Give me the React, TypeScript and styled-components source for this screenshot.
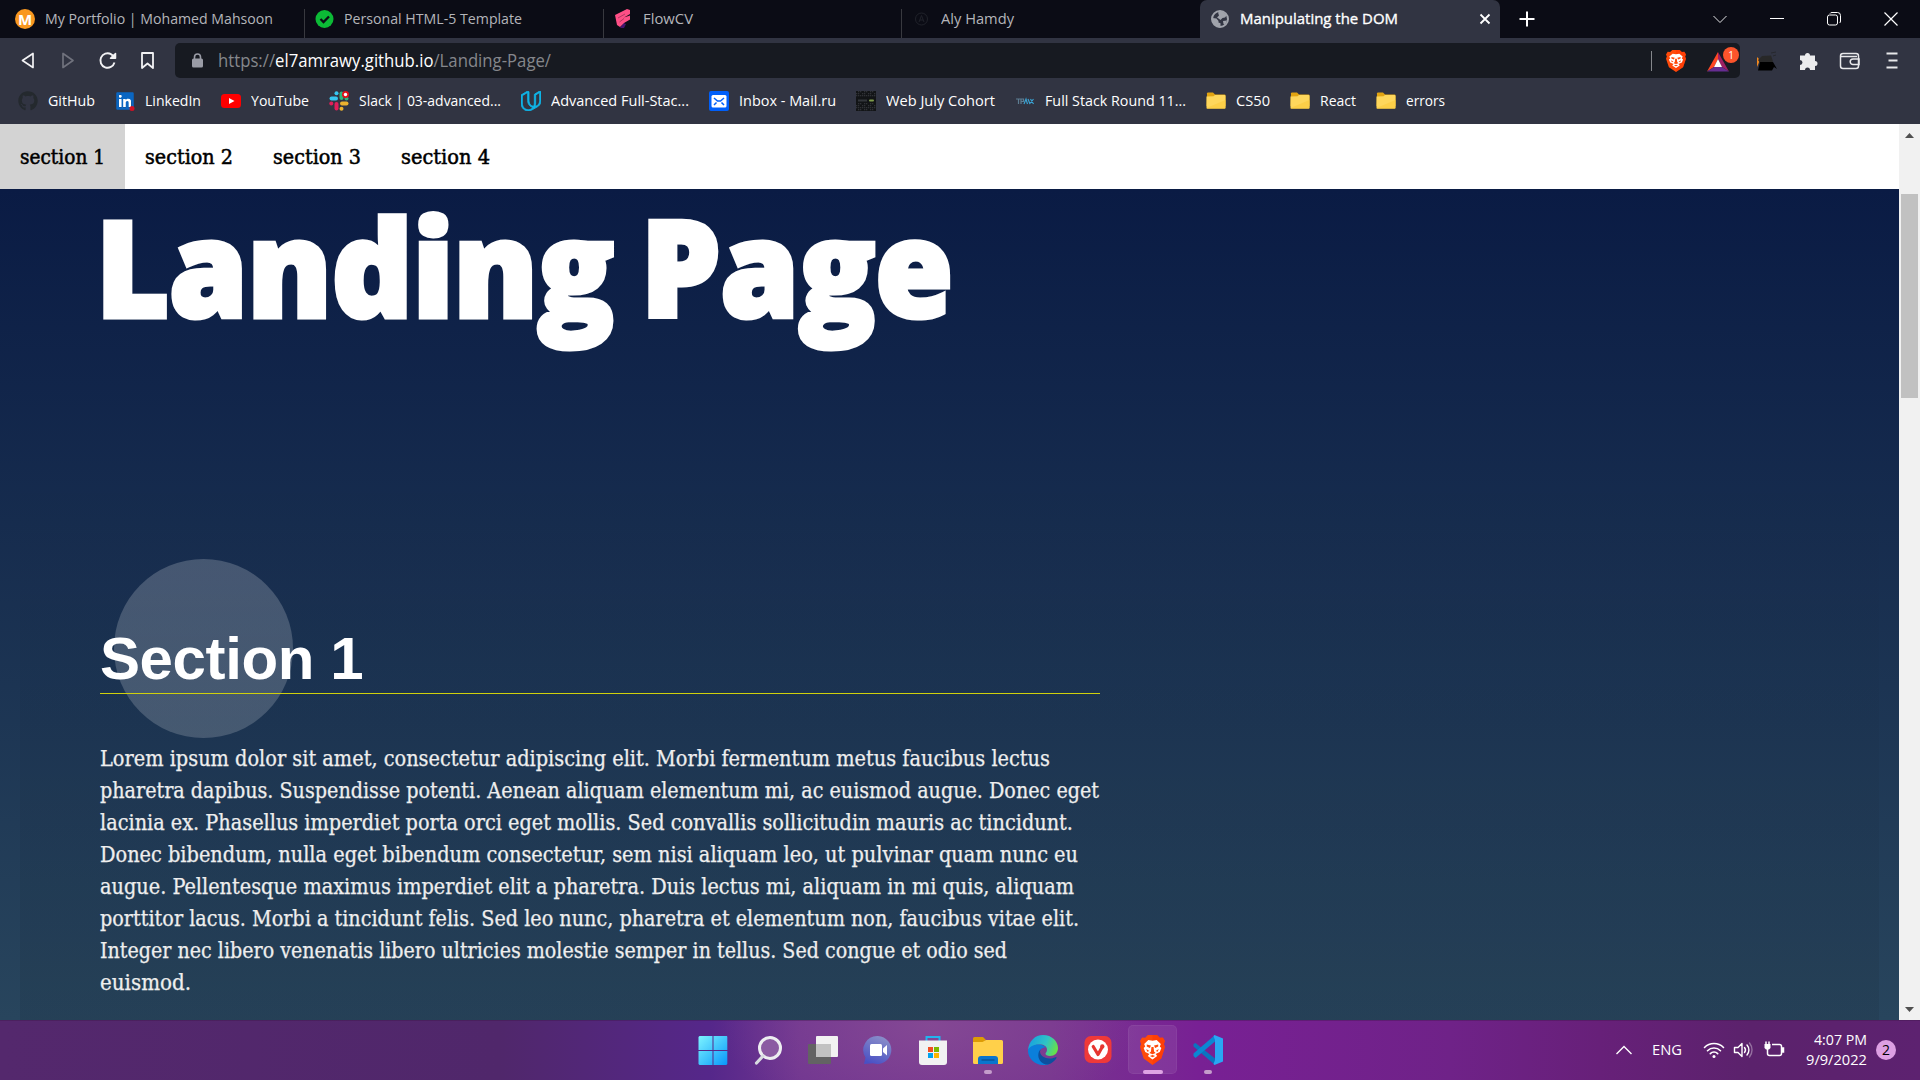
import React, { useLayoutEffect, useRef, useState } from "react";
import styled, { createGlobalStyle, css } from "styled-components";
import { FaGithub, FaLinkedin } from "react-icons/fa";
import { SiUdacity } from "react-icons/si";

const UI_FONT = `"Open Sans", "Noto Sans", sans-serif`;
const SERIF_FONT = `"DejaVu Serif Condensed", "DejaVu Serif", serif`;

const GlobalStyle = createGlobalStyle`
  * { box-sizing: border-box; }
  body { margin: 0; background: #0b0c15; overflow: hidden; }
  svg { display: block; flex: none; }
`;

/* ---------- text that is set to an exact measure ---------- */

const Measure = styled.span<{ $width: number }>`
  display: inline-block;
  flex: none;
  width: ${(p) => p.$width}px;
  padding-bottom: 2px;
  white-space: nowrap;
`;

const Stretch = styled.span`
  display: inline-block;
  transform-origin: 0 50%;
`;

function FitText({ width, children }: { width: number; children: React.ReactNode }) {
  const ref = useRef<HTMLSpanElement>(null);
  const [scale, setScale] = useState(1);
  useLayoutEffect(() => {
    if (ref.current) {
      const natural = ref.current.getBoundingClientRect().width;
      if (natural > 0) setScale(width / natural);
    }
  }, []);
  return (
    <Measure $width={width}>
      <Stretch ref={ref} style={{ transform: `scaleX(${scale})` }}>
        {children}
      </Stretch>
    </Measure>
  );
}

/* ---------- window ---------- */

const Screen = styled.div`
  display: flex;
  flex-direction: column;
  width: 1920px;
  height: 1080px;
  overflow: hidden;
  font-family: ${UI_FONT};
  font-size: 15px;
  line-height: 20px;
`;

const TabStrip = styled.div`
  display: flex;
  flex: none;
  height: 38px;
  background: #0b0c15;
`;

const Tab = styled.div<{ $active?: boolean; $width: number }>`
  display: flex;
  align-items: center;
  gap: ${(p) => (p.$active ? 11 : 9)}px;
  width: ${(p) => p.$width}px;
  padding: 0 9px 0 ${(p) => (p.$active ? 11 : 10)}px;
  color: #b4b5ba;
  ${(p) =>
    p.$active &&
    css`
      background: #313442;
      border-radius: 7px 7px 0 0;
      color: #fff;
      -webkit-text-stroke: 0.35px #fff;
    `}
`;

const TabDivider = styled.div`
  width: 1px;
  height: 29px;
  margin-top: 9px;
  background: #38393f;
`;

const Grow = styled.div`
  flex: 1;
`;

const NewTab = styled.div`
  display: flex;
  align-items: center;
  padding-left: 19px;
`;

const WindowButtons = styled.div`
  display: flex;
  align-items: center;
  gap: 43px;
  padding-right: 22px;
`;

const Toolbar = styled.div`
  display: flex;
  flex: none;
  align-items: center;
  height: 46px;
  background: #313442;
`;

const NavButtons = styled.div`
  display: flex;
  align-items: center;
  gap: 20px;
  width: 175px;
  padding-left: 18px;
`;

const AddressBar = styled.div`
  display: flex;
  align-items: center;
  width: 1565px;
  height: 35px;
  margin-top: -1px;
  padding: 0 1px 0 16px;
  border-radius: 5px;
  background: #171a21;
  color: #85878c;
  font-size: 17.5px;
`;

const Lock = styled.div`
  margin-right: 14px;
`;

const Host = styled.span`
  color: #fff;
`;

const BarDivider = styled.div`
  width: 1px;
  height: 20px;
  margin-right: 14px;
  background: #85878c;
`;

const Rewards = styled.div`
  position: relative;
  width: 33px;
  height: 30px;
  margin-left: 20px;
  padding-top: 6px;
`;

const RewardBadge = styled.div`
  position: absolute;
  top: 1px;
  right: 0;
  width: 16px;
  height: 16px;
  border-radius: 8px;
  background: #fb542b;
  color: #fff;
  font-size: 10px;
  line-height: 16px;
  text-align: center;
`;

const Extensions = styled.div`
  display: flex;
  align-items: center;
  gap: 20px;
  padding-left: 17px;
`;

const Bookmarks = styled.div`
  display: flex;
  flex: none;
  align-items: center;
  gap: 20px;
  height: 40px;
  padding: 0 0 6px 18px;
  background: #313442;
  color: #fff;
`;

const Bookmark = styled.div`
  display: flex;
  align-items: center;
  gap: 10px;
`;

/* ---------- page ---------- */

const Browser = styled.div`
  display: flex;
  flex: none;
  height: 896px;
`;

const Page = styled.div`
  width: 1899px;
  height: 896px;
`;

const SiteNav = styled.nav`
  display: flex;
  height: 65px;
  background: #fff;
  font-family: ${SERIF_FONT};
  font-size: 21px;
  color: #000;
`;

const SiteLink = styled.a<{ $active?: boolean }>`
  display: flex;
  align-items: center;
  padding: 2px 20px 0;
  background: ${(p) => (p.$active ? "#d3d3d3" : "transparent")};
  -webkit-text-stroke: 0.5px #000;
`;

const Main = styled.main`
  height: 831px;
  padding: 0 20px;
  background: linear-gradient(180deg, rgb(10, 27, 68), rgb(40, 69, 93));
`;

const Title = styled.h1`
  display: flex;
  gap: 27px;
  height: 251px;
  margin: 0;
  padding: 0 0 0 76px;
  color: #fff;
  font-family: "Open Sans", sans-serif;
  font-size: 133px;
  font-weight: 800;
  line-height: 154px;
  -webkit-text-stroke: 5px #fff;
  ${Measure} {
    padding: 0;
  }
`;

const Section = styled.section`
  position: relative;
  height: 580px;
  padding: 194px 80px 0;
  background: linear-gradient(180deg, rgba(0, 0, 0, 0), rgba(0, 0, 0, 0.07));
`;

const Circle = styled.div`
  position: absolute;
  top: 119px;
  left: 94px;
  width: 179px;
  height: 179px;
  border-radius: 50%;
  background: linear-gradient(0deg, rgba(255, 255, 255, 0.18), rgba(255, 255, 255, 0.2));
`;

const SectionTitle = styled.h2`
  position: relative;
  width: 1000px;
  height: 60px;
  margin: 0 0 49px;
  border-bottom: 1px solid #d0d00c;
  color: #fff;
  font-family: "Liberation Sans", Arial, sans-serif;
  font-size: 60px;
  font-weight: 700;
  letter-spacing: -0.4px;
  line-height: 49px;
`;

const Paragraph = styled.p`
  display: flex;
  flex-direction: column;
  margin: 0;
  color: #eee;
  font-family: ${SERIF_FONT};
  font-size: 21.5px;
  line-height: 32px;
  -webkit-text-stroke: 0.25px #eee;
  ${Measure} {
    height: 32px;
    padding: 0;
  }
`;

const Scrollbar = styled.div`
  display: flex;
  flex-direction: column;
  align-items: center;
  width: 21px;
  height: 896px;
  padding: 9px 0 8px;
  background: #f1f1f1;
`;

const Thumb = styled.div`
  width: 17px;
  height: 204px;
  margin: 56px 0 auto;
  background: #c1c1c1;
`;

/* ---------- taskbar ---------- */

const Taskbar = styled.footer`
  display: flex;
  flex: none;
  height: 60px;
  padding-left: 685px;
  box-shadow: inset 0 1px rgba(60, 20, 70, 0.35);
  background:
    radial-gradient(ellipse 210px 100px at 930px 5px, rgba(139, 80, 150, 0.7), rgba(139, 80, 150, 0)),
    linear-gradient(90deg, #54286d 0, #50276b 500px, #55278a 710px, #703590 800px, #77358f 1050px, #782094 1200px, #6f2288 1450px, #672079 1600px, #5b226c 1750px, #5d2270 1920px);
  color: #fff;
`;

const AppCell = styled.div`
  display: flex;
  width: 55px;
  padding: 5px 3px 0;
`;

const AppButton = styled.div<{ $active?: boolean }>`
  display: flex;
  flex-direction: column;
  align-items: center;
  width: 49px;
  height: 49px;
  padding-top: 10px;
  border-radius: 5px;
  ${(p) =>
    p.$active &&
    css`
      background: rgba(255, 255, 255, 0.08);
      box-shadow: inset 0 0 0 1px rgba(255, 255, 255, 0.05);
    `}
`;

const Indicator = styled.div<{ $active?: boolean }>`
  width: ${(p) => (p.$active ? 20 : 8)}px;
  height: 4px;
  margin-top: 5px;
  border-radius: 2px;
  background: ${(p) => (p.$active ? "#dfa3e4" : "#c49ccb")};
`;

const Tray = styled.div`
  display: flex;
  align-items: center;
  width: 305px;
`;

const Gap = styled.div<{ $w: number }>`
  width: ${(p) => p.$w}px;
`;

const Clock = styled.div`
  display: flex;
  flex-direction: column;
  align-items: flex-end;
  width: 62px;
  margin: 0 9px 0 20px;
  padding-bottom: 2px;
  ${Measure} {
    height: 20px;
    padding: 0;
  }
`;

const Count = styled.div`
  width: 20px;
  height: 20px;
  border-radius: 50%;
  background: #dda0e3;
  color: #000;
  font-size: 14px;
  line-height: 20px;
  text-align: center;
`;

/* ---------- icons ---------- */

const Globe = () => (
  <svg width="18" height="18" viewBox="0 0 18 18">
    <circle cx="9" cy="9" r="8" fill="none" stroke="#a0a3ab" strokeWidth="2" />
    <path d="M1.500 8l4 .5 2 2.500v1.500l2 .8v3.200l-2 .8A8.500 8.500 0 0 1 .8 9zM7 2.500l3.500-1.500 5.500 4-2 2.500-2.500.5L9.500 10 7.500 8.500 6 7.500 8 5.500zM12 11l4-.5-2 4.500-1.500-1z" fill="#a0a3ab" />
  </svg>
);

const Folder = () => (
  <svg width="20" height="18" viewBox="0 0 20 18">
    <path d="M1 2a1 1 0 0 1 1-1.500h5l2 2h9.500a1 1 0 0 1 1 1V14H.5z" fill="#e2a411" />
    <path d="M.5 4.500l7-.2L9 3h9.500a1 1 0 0 1 1 1v11.500a1 1 0 0 1-1 1h-17a1 1 0 0 1-1-1z" fill="#fed75c" />
    <path d="M.5 16a1 1 0 0 0 1 .9h17a1 1 0 0 0 1-1V8z" fill="#fac93b" opacity=".6" />
  </svg>
);

const SlackIcon = () => (
  <svg width="20" height="20" viewBox="0 0 20 20">
    <g strokeWidth="4" strokeLinecap="round">
      <path d="M2.500 7.500h4.500" stroke="#36c5f0" />
      <path d="M12.500 2.500V7" stroke="#2eb67d" />
      <path d="M13 12.500h4.500" stroke="#ecb22e" />
      <path d="M7.500 13v4.500" stroke="#e01e5a" />
    </g>
    <circle cx="7.500" cy="2.300" r="2" fill="#36c5f0" />
    <circle cx="2.300" cy="12.500" r="2" fill="#e01e5a" />
    <circle cx="12.500" cy="17.700" r="2" fill="#ecb22e" />
    <circle cx="17.500" cy="7.500" r="2" fill="#2eb67d" />
    <circle cx="16.500" cy="3.500" r="3.500" fill="#e01219" />
    <circle cx="16.500" cy="3.500" r="1.700" fill="#fff" />
  </svg>
);

const QrIcon = () => {
  const cells: React.ReactNode[] = [];
  for (let y = 0; y < 10; y++)
    for (let x = 0; x < 10; x++)
      if ((x * 7 + y * 5 + x * y) % 3 !== 0 && (y < 3 || y > 5))
        cells.push(<rect key={`${x}-${y}`} x={x * 2} y={y * 2} width="1.300" height="1.300" fill="#303236" />);
  return (
    <svg width="20" height="20" viewBox="0 0 20 20">
      <rect width="20" height="20" fill="#121416" />
      {cells}
      <rect x="2" y="8.500" width="9" height="2" fill="#33363b" />
      <rect x="13" y="8.500" width="5" height="2" rx="1" fill="#7f9c4a" />
    </svg>
  );
};

const BraveIcon = ({ w, h }: { w: number; h: number }) => (
  <svg width={w} height={h} viewBox="0 0 24 30" preserveAspectRatio="none">
    <path d="M7.500 0h9l2.500 2.800 3-.3L24 6l-1 3 1 3-3.500 11.500L12 30 3.500 23.500 0 12l1-3-1-3 2-3.500 3 .3z" fill="#ff4a0a" />
    <path d="M12 0h4.500L19 2.800l3-.3L24 6l-1 3 1 3-3.500 11.500L12 30z" fill="#ff2a00" opacity=".35" />
    <path d="M8 5l4 .8L16 5l4 4-1 2.500 1.500 1.500-1.500 4-4 2 1.500 2L12 24.500 7.500 21 9 19l-4-2-1.500-4L5 11.500 4 9z" fill="#fff" />
    <path d="M6.500 9.500l4 1-1 2.500-3-1.500zM17.500 9.500l-4 1 1 2.500 3-1.500zM11 12h2l.5 4.500L15 18l-3 1.200L9 18l1.500-1.500zM6 14l3 2-2 .8zM18 14l-3 2 2 .8zM9.500 21l2.500-1 2.500 1L12 22.300z" fill="#ff4a0a" />
  </svg>
);

const apps: { name: string; icon: React.ReactNode; running?: boolean; active?: boolean }[] = [
  {
    name: "start",
    icon: (
      <svg width="30" height="30" viewBox="0 0 30 30">
        <defs>
          <linearGradient id="win" x1="0" y1="0" x2="1" y2="1">
            <stop offset="0" stopColor="#7df4ff" />
            <stop offset="1" stopColor="#0897fb" />
          </linearGradient>
        </defs>
        <path d="M1.500 1H14.500v14H.5V2zM15.500 1H29l.3 1v13H15.500zM.5 16h14v14H1.500l-1-1zM15.500 16h13.800v13l-1 1H15.500z" fill="url(#win)" />
      </svg>
    ),
  },
  {
    name: "search",
    icon: (
      <svg width="30" height="30" viewBox="0 0 30 30" fill="none">
        <circle cx="17" cy="13" r="10.500" fill="#8b5aa2" stroke="#ededf0" strokeWidth="3" />
        <path d="M3.500 28l6.500-7" stroke="#d8dbe0" strokeWidth="3.200" strokeLinecap="round" />
      </svg>
    ),
  },
  {
    name: "views",
    icon: (
      <svg width="30" height="30" viewBox="0 0 30 30">
        <rect x="0" y="9" width="23" height="20" rx="1" fill="#636363" />
        <rect x="8" y="1" width="22" height="21" rx="1" fill="#f2f2f2" />
        <rect x="8" y="9" width="15" height="13" fill="#c2c2c2" />
      </svg>
    ),
  },
  {
    name: "chat",
    icon: (
      <svg width="30" height="30" viewBox="0 0 30 30">
        <defs>
          <linearGradient id="chat" x1=".7" y1="0" x2=".3" y2="1">
            <stop offset="0" stopColor="#8b8fc9" />
            <stop offset="1" stopColor="#4950c4" />
          </linearGradient>
        </defs>
        <path d="M15 1a14 14 0 1 1-5 27.300L1 29l1.500-6.500A14 14 0 0 1 15 1z" fill="url(#chat)" />
        <rect x="7" y="9" width="12" height="12" rx="1.500" fill="#fff" />
        <path d="M20 13.500l4-3.500v10.500l-4-3.500z" fill="#fff" />
      </svg>
    ),
  },
  {
    name: "store",
    icon: (
      <svg width="30" height="30" viewBox="0 0 30 30">
        <path d="M8.500 7V2h13v5" fill="none" stroke="#22b4ee" strokeWidth="2" />
        <path d="M1 5.500h28V27a3 3 0 0 1-3 3H4a3 3 0 0 1-3-3z" fill="#f1f1f2" />
        <path d="M10 12h5v5h-5z" fill="#f04e23" />
        <path d="M16 12h5v5h-5z" fill="#7cb700" />
        <path d="M10 18h5v5h-5z" fill="#00a2ee" />
        <path d="M16 18h5v5h-5z" fill="#fdb400" />
      </svg>
    ),
  },
  {
    name: "files",
    running: true,
    icon: (
      <svg width="30" height="30" viewBox="0 0 30 30">
        <path d="M0 3.500A1.500 1.500 0 0 1 1.500 2H10l3 3-3 3H0z" fill="#dd9c05" />
        <path d="M0 7h9.500L13 5h15.500A1.500 1.500 0 0 1 30 6.500v21a1.500 1.500 0 0 1-1.500 1.500h-27A1.500 1.500 0 0 1 0 27.500z" fill="#ffd04a" />
        <path d="M5 29v-5a3 3 0 0 1 3-3h14a3 3 0 0 1 3 3v5z" fill="#0a75cd" />
        <path d="M8.500 25h13" stroke="#0a4f92" strokeWidth="1.300" />
      </svg>
    ),
  },
  {
    name: "edge",
    icon: (
      <svg width="30" height="30" viewBox="0 0 30 30">
        <defs>
          <linearGradient id="edgeTop" x1="0" y1=".2" x2="1" y2=".5">
            <stop offset="0" stopColor="#179fe0" />
            <stop offset=".6" stopColor="#2fc3c6" />
            <stop offset="1" stopColor="#66e04b" />
          </linearGradient>
        </defs>
        <path d="M0 15C1 6 7 0 15 0c9 0 15 6.500 15 13 0 5-3.500 8-8 8-3 0-4.500-1-4.500-2.200 0-1 1.500-1.500 1.500-4.300 0-3-3-5-7-5-5 0-9 2-12 5.500z" fill="url(#edgeTop)" />
        <path d="M0 15C2 11 6.500 9.500 10.500 9.500c4 0 6 1.500 7.500 3-3-.5-7 1.500-7 6.500 0 6 5 9.500 10 10.200C18 30 16.500 30 15 30 6 30-.5 22 0 15z" fill="#0b7fdb" />
        <path d="M12.500 14.500c-5 5-1 15.500 7.500 15 4-1 7-4 8.500-6.500.5-1-.5-1-1-.7-2 1-4 1.200-6 1.200-5 0-9.500-3-9.500-7z" fill="#0d4f9e" />
      </svg>
    ),
  },
  {
    name: "vivaldi",
    icon: (
      <svg width="28" height="30" viewBox="0 0 28 30">
        <rect x=".5" y="1" width="27" height="27" rx="6.500" fill="#ef3939" />
        <circle cx="14" cy="14.500" r="10" fill="#fff" />
        <path d="M9.200 11.500l4.800 8 3.500-6.300" fill="none" stroke="#e6352f" strokeWidth="3.200" strokeLinecap="round" strokeLinejoin="round" />
        <circle cx="18.300" cy="11.500" r="2.200" fill="#e6352f" />
      </svg>
    ),
  },
  { name: "brave", running: true, active: true, icon: <BraveIcon w={25} h={30} /> },
  {
    name: "code",
    running: true,
    icon: (
      <svg width="30" height="30" viewBox="0 0 30 30">
        <path d="M2.500 8L22 23.500V30L.5 11.500V9z" fill="#0a74c0" />
        <path d="M2.500 23L22 6.500V0L.5 18.500V21z" fill="#0b87d3" />
        <path d="M21.500 0L30 3.500v23L21.500 30l-1-1 1.500-4V5l-1.500-4z" fill="#2aa7f3" />
      </svg>
    ),
  },
];

const bookmarks: { label: string; width: number; icon: React.ReactNode }[] = [
  { label: "GitHub", width: 47, icon: <FaGithub size={20} color="#24292e" /> },
  {
    label: "LinkedIn",
    width: 56,
    icon: (
      <svg width="20" height="20" viewBox="0 0 20 20">
        <rect x="4" y="4" width="12" height="12" fill="#fff" />
        <FaLinkedin size={20} color="#0a66c2" />
        <circle cx="17" cy="17.500" r="2.500" fill="#d11124" />
      </svg>
    ),
  },
  {
    label: "YouTube",
    width: 58,
    icon: (
      <svg width="20" height="20" viewBox="0 0 20 20">
        <rect y="3" width="20" height="14" rx="3.500" fill="#f00" />
        <path d="M8 7l5.500 3L8 13z" fill="#fff" />
      </svg>
    ),
  },
  { label: "Slack | 03-advanced...", width: 142, icon: <SlackIcon /> },
  {
    label: "Advanced Full-Stac...",
    width: 138,
    icon: <SiUdacity size={20} color="#0fb5e8" stroke="#0fb5e8" strokeWidth={1} />,
  },
  {
    label: "Inbox - Mail.ru",
    width: 97,
    icon: (
      <svg width="20" height="20" viewBox="0 0 20 20">
        <rect width="20" height="20" rx="2" fill="#005ff9" />
        <rect x="2.500" y="4" width="15" height="12.500" rx="1.500" fill="#fff" />
        <path d="M5 7l3.500 3h3L15 7M5 14l2.500-2.500M15 14l-2.500-2.500" fill="none" stroke="#005ff9" strokeWidth="1.500" />
      </svg>
    ),
  },
  { label: "Web July Cohort", width: 109, icon: <QrIcon /> },
  {
    label: "Full Stack Round 11...",
    width: 141,
    icon: (
      <svg width="20" height="20" viewBox="0 0 20 20" fill="none" strokeWidth="1.200">
        <path d="M1 8h5M3.500 8v5M6 13V8h2.500v2.500H6" stroke="#5d7d92" />
        <path d="M9 13l2-5 1.500 5M13 8l2 5M14.500 13l4-5M15.500 8l3 5" stroke="#3aa0d0" />
      </svg>
    ),
  },
  { label: "CS50", width: 34, icon: <Folder /> },
  { label: "React", width: 36, icon: <Folder /> },
  { label: "errors", width: 39, icon: <Folder /> },
];

const navLinks = [
  { label: "section 1", width: 85 },
  { label: "section 2", width: 88 },
  { label: "section 3", width: 88 },
  { label: "section 4", width: 89 },
];

const paragraph: [string, number][] = [
  ["Lorem ipsum dolor sit amet, consectetur adipiscing elit. Morbi fermentum metus faucibus lectus", 950],
  ["pharetra dapibus. Suspendisse potenti. Aenean aliquam elementum mi, ac euismod augue. Donec eget", 999],
  ["lacinia ex. Phasellus imperdiet porta orci eget mollis. Sed convallis sollicitudin mauris ac tincidunt.", 973],
  ["Donec bibendum, nulla eget bibendum consectetur, sem nisi aliquam leo, ut pulvinar quam nunc eu", 978],
  ["augue. Pellentesque maximus imperdiet elit a pharetra. Duis lectus mi, aliquam in mi quis, aliquam", 974],
  ["porttitor lacus. Morbi a tincidunt felis. Sed leo nunc, pharetra et elementum non, faucibus vitae elit.", 979],
  ["Integer nec libero venenatis libero ultricies molestie semper in tellus. Sed congue et odio sed", 907],
  ["euismod.", 91],
];

export default function App() {
  return (
    <Screen>
      <GlobalStyle />
      <TabStrip>
        <Tab $width={304}>
          <svg width="26" height="22" viewBox="-5 -1 26 22">
            <circle cx="10" cy="10" r="10" fill="#f99820" />
            <text x="10" y="15.500" textAnchor="middle" fontFamily="Open Sans" fontWeight="700" fontSize="15" fill="#fff">M</text>
          </svg>
          <FitText width={228}>My Portfolio | Mohamed Mahsoon</FitText>
        </Tab>
        <TabDivider />
        <Tab $width={298}>
          <svg width="20" height="20" viewBox="0 0 20 20">
            <circle cx="9.500" cy="10" r="9" fill="#0cbb36" />
            <path d="M5.500 10l3 3 5.500-5.500" fill="none" stroke="#0b0c15" strokeWidth="2.300" />
          </svg>
          <FitText width={178}>Personal HTML-5 Template</FitText>
        </Tab>
        <TabDivider />
        <Tab $width={297}>
          <svg width="20" height="20" viewBox="0 0 20 20">
            <path d="M6 19l3.500-5 2.500 1-2 4z" fill="#45146e" />
            <path d="M1 6L13 0l3 1v4l-6 3.500 6-2v4L10 14l-4 4-3-2z" fill="#ff4f86" />
            <path d="M4 9l7-4M5.500 13L10 9.500" stroke="#0b0c15" strokeWidth=".8" opacity=".4" />
          </svg>
          <FitText width={50}>FlowCV</FitText>
        </Tab>
        <TabDivider />
        <Tab $width={298}>
          <svg width="20" height="20" viewBox="0 0 20 20" fill="none" stroke="#20222a">
            <circle cx="9.500" cy="10" r="6" />
            <path d="M7 13l2.500-6.500L12 13M8 11h3" />
          </svg>
          <FitText width={73}>Aly Hamdy</FitText>
        </Tab>
        <Tab $active $width={300}>
          <Globe />
          <FitText width={158}>Manipulating the DOM</FitText>
          <Grow />
          <svg width="12" height="12" viewBox="0 0 12 12">
            <path d="M1.500 1.500l9 9M10.500 1.500l-9 9" stroke="#fff" strokeWidth="1.800" />
          </svg>
        </Tab>
        <NewTab>
          <svg width="16" height="16" viewBox="0 0 16 16">
            <path d="M8 .5v15M.5 8h15" stroke="#fff" strokeWidth="2" />
          </svg>
        </NewTab>
        <Grow />
        <WindowButtons>
          <svg width="14" height="14" viewBox="0 0 14 14" fill="none" stroke="#e4e4e6">
            <path d="M.5 4L7 10.500 13.500 4" />
          </svg>
          <svg width="14" height="14" viewBox="0 0 14 14" fill="none" stroke="#fff">
            <path d="M0 6.500h14" />
          </svg>
          <svg width="14" height="14" viewBox="0 0 14 14" fill="none" stroke="#fff">
            <rect x=".5" y="3" width="10" height="10" rx="2" />
            <path d="M3 1.500Q3.500.5 5 .5h5.500a3 3 0 0 1 3 3V9q0 1.500-1 2" />
          </svg>
          <svg width="14" height="14" viewBox="0 0 14 14" fill="none" stroke="#fff" strokeWidth="1.200">
            <path d="M.5.5l13 13M13.500.5l-13 13" />
          </svg>
        </WindowButtons>
      </TabStrip>

      <Toolbar>
        <NavButtons>
          <svg width="20" height="20" viewBox="0 0 20 20" fill="none" stroke="#f2f2f4" strokeWidth="1.700" strokeLinejoin="round">
            <path d="M15 2.500v14L4.500 9.500z" />
          </svg>
          <svg width="20" height="20" viewBox="0 0 20 20" fill="none" stroke="#70727d" strokeWidth="1.700" strokeLinejoin="round">
            <path d="M5 2.500v14l10-7z" />
          </svg>
          <svg width="20" height="20" viewBox="0 0 20 20" fill="none" stroke="#f2f2f4" strokeWidth="1.900">
            <path d="M16.500 11.500A7.200 7.200 0 1 1 13 3.200l2 1.400" />
            <path d="M17.500 2.500v4.800h-5z" fill="#f2f2f4" stroke="#f2f2f4" strokeWidth="1.500" strokeLinejoin="round" />
          </svg>
          <svg width="20" height="20" viewBox="0 0 20 20" fill="none" stroke="#f2f2f4" strokeWidth="1.800" strokeLinejoin="round">
            <path d="M4 2h11v15l-5.500-4.500L4 17z" />
          </svg>
        </NavButtons>
        <AddressBar>
          <Lock>
            <svg width="13" height="15" viewBox="0 0 13 15">
              <rect x="1" y="5.500" width="11" height="9" rx="1.500" fill="#9a9ca6" />
              <path d="M3.500 6V4a3 3 0 0 1 6 0v2" fill="none" stroke="#9a9ca6" strokeWidth="1.600" />
            </svg>
          </Lock>
          <FitText width={333}>
            https://<Host>el7amrawy.github.io</Host>/Landing-Page/
          </FitText>
          <Grow />
          <BarDivider />
          <BraveIcon w={20} h={22} />
          <Rewards>
            <svg width="24" height="20" viewBox="0 0 24 20">
              <path d="M12 0L1 19.500l7-4.500L12 7z" fill="#ff4724" />
              <path d="M12 0l11 19.500L16 15 12 7z" fill="#9e1f63" />
              <path d="M1 19.500h22L16 15H8z" fill="#662d91" />
              <path d="M12 7l4 8H8z" fill="#fff" />
            </svg>
            <RewardBadge>1</RewardBadge>
          </Rewards>
        </AddressBar>
        <Extensions>
          <svg width="22" height="20" viewBox="0 0 22 20">
            <path d="M0 6l3 3-3 7z" fill="#f58a1f" />
            <path d="M1 9l4-4 9-.5 2 6-2.500 1.500H3z" fill="#282828" />
            <path d="M3 11h13l4 7-3-2-2 3.500H1z" fill="#000" />
            <path d="M14 2l5-1M16 5l3-1" stroke="#26282e" />
          </svg>
          <svg width="20" height="20" viewBox="0 0 20 20">
            <path d="M1 4.500h5a2.500 2.500 0 1 1 5 0h5v5.500a2.500 2.500 0 1 1 0 5V19h-5a2.500 2.500 0 0 0-5 0H1v-5a2.500 2.500 0 0 0 0-5z" fill="#ececee" />
          </svg>
          <svg width="22" height="20" viewBox="0 0 22 20" fill="none" stroke="#e8e8ea" strokeWidth="1.500">
            <rect x="1.500" y="2.500" width="18" height="15" rx="2.500" />
            <path d="M1.500 5.500h16.500M20 8h-6a2.800 2.800 0 0 0 0 5.600h6z" />
          </svg>
          <svg width="24" height="20" viewBox="0 0 24 20">
            <path d="M5.500 2.500h11M7.500 9.500h9M5.500 16.500h11" stroke="#e8e8ea" strokeWidth="2" />
          </svg>
        </Extensions>
      </Toolbar>

      <Bookmarks>
        {bookmarks.map((b) => (
          <Bookmark key={b.label}>
            {b.icon}
            <FitText width={b.width}>{b.label}</FitText>
          </Bookmark>
        ))}
      </Bookmarks>

      <Browser>
        <Page>
          <SiteNav>
            {navLinks.map((l, i) => (
              <SiteLink key={l.label} $active={i === 0}>
                <FitText width={l.width}>{l.label}</FitText>
              </SiteLink>
            ))}
          </SiteNav>
          <Main>
            <Title>
              <FitText width={518}>Landing</FitText>
              <FitText width={312}>Page</FitText>
            </Title>
            <Section>
              <Circle />
              <SectionTitle>Section 1</SectionTitle>
              <Paragraph>
                {paragraph.map(([line, width]) => (
                  <FitText key={line} width={width}>
                    {line}
                  </FitText>
                ))}
              </Paragraph>
            </Section>
          </Main>
        </Page>
        <Scrollbar>
          <svg width="9" height="5" viewBox="0 0 9 5">
            <path d="M4.500 0L9 5H0z" fill="#505050" />
          </svg>
          <Thumb />
          <svg width="9" height="5" viewBox="0 0 9 5">
            <path d="M4.500 5L9 0H0z" fill="#505050" />
          </svg>
        </Scrollbar>
      </Browser>

      <Taskbar>
        {apps.map((a) => (
          <AppCell key={a.name}>
            <AppButton $active={a.active}>
              {a.icon}
              {a.running && <Indicator $active={a.active} />}
            </AppButton>
          </AppCell>
        ))}
        <Grow />
        <Tray>
          <svg width="18" height="10" viewBox="0 0 18 10" fill="none" stroke="#fff" strokeWidth="1.400">
            <path d="M1.500 9L9 1.500 16.500 9" />
          </svg>
          <Gap $w={19} />
          <FitText width={30}>ENG</FitText>
          <Gap $w={21} />
          <svg width="22" height="18" viewBox="0 0 22 18" fill="none" stroke="#fff" strokeWidth="1.600" strokeLinecap="round">
            <path d="M1.500 6.500a13.400 13.400 0 0 1 19 0M4.500 9.700a9.200 9.200 0 0 1 13 0M7.300 12.600a5.200 5.200 0 0 1 7.400 0" />
            <circle cx="11" cy="15.500" r="1.500" fill="#fff" stroke="none" />
          </svg>
          <Gap $w={8} />
          <svg width="22" height="18" viewBox="0 0 22 18" fill="none" stroke="#fff" strokeWidth="1.400" strokeLinecap="round" strokeLinejoin="round">
            <path d="M1.500 6.500h3.500l4-4v13l-4-4H1.500z" />
            <path d="M11.500 6.500a4 4 0 0 1 0 5M14 4a7.500 7.500 0 0 1 0 10" />
            <path d="M16.500 2a11 11 0 0 1 0 14" opacity=".35" />
          </svg>
          <Gap $w={8} />
          <svg width="22" height="18" viewBox="0 0 22 18" fill="none" stroke="#fff" strokeWidth="1.500">
            <path d="M9 3.500h7.500a2 2 0 0 1 2 2v7a2 2 0 0 1-2 2H6.500q-2 0-2-2V8" />
            <path d="M19 7v4h1.500V7z" fill="#fff" />
            <path d="M1.500 3h6v4l-1.500 1.500h-3L1.500 7z" fill="#fff" stroke="none" />
            <path d="M3 4V.5M6 4V.5" />
          </svg>
          <Clock>
            <FitText width={53}>4:07 PM</FitText>
            <FitText width={61}>9/9/2022</FitText>
          </Clock>
          <Count>2</Count>
        </Tray>
      </Taskbar>
    </Screen>
  );
}
